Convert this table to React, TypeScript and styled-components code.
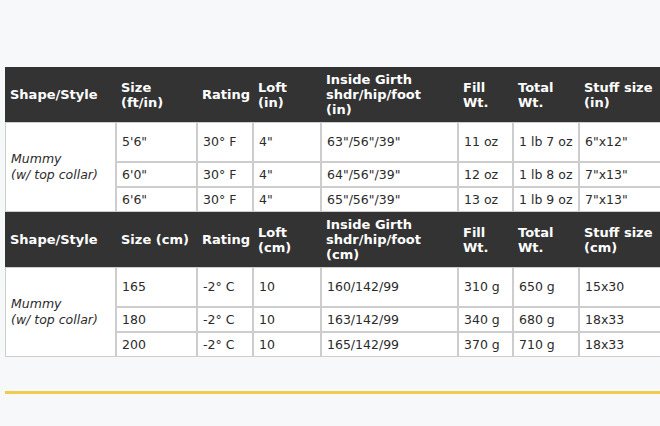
import styled, { createGlobalStyle } from 'styled-components';

interface SizeRow {
  size: string;
  rating: string;
  loft: string;
  girth: string;
  fill: string;
  total: string;
  stuff: string;
}

interface SpecSection {
  headers: string[][];
  style: string[];
  rows: SizeRow[];
}

const sections: SpecSection[] = [
  {
    headers: [
      ['Shape/Style'],
      ['Size', '(ft/in)'],
      ['Rating'],
      ['Loft', '(in)'],
      ['Inside Girth', 'shdr/hip/foot', '(in)'],
      ['Fill', 'Wt.'],
      ['Total', 'Wt.'],
      ['Stuff size', '(in)'],
    ],
    style: ['Mummy', '(w/ top collar)'],
    rows: [
      { size: '5\'6"', rating: '30° F', loft: '4"', girth: '63"/56"/39"', fill: '11 oz', total: '1 lb 7 oz', stuff: '6"x12"' },
      { size: '6\'0"', rating: '30° F', loft: '4"', girth: '64"/56"/39"', fill: '12 oz', total: '1 lb 8 oz', stuff: '7"x13"' },
      { size: '6\'6"', rating: '30° F', loft: '4"', girth: '65"/56"/39"', fill: '13 oz', total: '1 lb 9 oz', stuff: '7"x13"' },
    ],
  },
  {
    headers: [
      ['Shape/Style'],
      ['Size (cm)'],
      ['Rating'],
      ['Loft', '(cm)'],
      ['Inside Girth', 'shdr/hip/foot', '(cm)'],
      ['Fill', 'Wt.'],
      ['Total', 'Wt.'],
      ['Stuff size', '(cm)'],
    ],
    style: ['Mummy', '(w/ top collar)'],
    rows: [
      { size: '165', rating: '-2° C', loft: '10', girth: '160/142/99', fill: '310 g', total: '650 g', stuff: '15x30' },
      { size: '180', rating: '-2° C', loft: '10', girth: '163/142/99', fill: '340 g', total: '680 g', stuff: '18x33' },
      { size: '200', rating: '-2° C', loft: '10', girth: '165/142/99', fill: '370 g', total: '710 g', stuff: '18x33' },
    ],
  },
];

const columnWidths = [111, 81, 56, 68, 137, 55, 66, 100];

const GlobalStyle = createGlobalStyle`
  html, body {
    margin: 0;
    padding: 0;
    background: #f7f8f9;
    overflow: hidden;
  }
  body {
    font-family: "DejaVu Sans", Verdana, sans-serif;
  }
`;

const Page = styled.main`
  width: 660px;
  height: 426px;
  padding: 67px 0 0 5px;
  box-sizing: border-box;
  overflow: hidden;
`;

const SpecTable = styled.table`
  border-collapse: separate;
  border-spacing: 0;
  table-layout: fixed;
  width: ${columnWidths.reduce((a, b) => a + b, 0)}px;
  font-size: 12.5px;
  color: #2b2b2b;
`;

const HeadRow = styled.tr`
  height: 55px;
`;

const HeadCell = styled.th`
  background: #333;
  color: #fff;
  font-size: 13px;
  font-weight: bold;
  text-align: left;
  vertical-align: middle;
  padding: 0 5px;
  line-height: 15px;
  white-space: nowrap;
`;

const BodyRow = styled.tr<{ $tall?: boolean }>`
  height: ${(p) => (p.$tall ? 40 : 25)}px;
`;

const Cell = styled.td`
  background: #fff;
  border: 1px solid #cdcdcd;
  padding: 0 5px;
  vertical-align: middle;
  white-space: nowrap;
  line-height: 16px;
`;

const StyleCell = styled(Cell)`
  font-style: italic;
  white-space: normal;
`;

const Divider = styled.hr`
  margin: 34px 0 0;
  border: 0;
  height: 3px;
  width: 660px;
  background: #f1cb4b;
`;

function App() {
  return (
    <>
      <GlobalStyle />
      <Page>
        <SpecTable>
          <colgroup>
            {columnWidths.map((w, i) => (
              <col key={i} style={{ width: w }} />
            ))}
          </colgroup>
          <tbody>
            {sections.map((section, si) => [
              <HeadRow key={`h${si}`}>
                {section.headers.map((lines, i) => (
                  <HeadCell key={i}>
                    {lines.map((line, li) => (
                      <div key={li}>{line}</div>
                    ))}
                  </HeadCell>
                ))}
              </HeadRow>,
              ...section.rows.map((row, ri) => (
                <BodyRow key={`r${si}-${ri}`} $tall={ri === 0}>
                  {ri === 0 && (
                    <StyleCell rowSpan={section.rows.length}>
                      {section.style[0]}
                      <br />
                      {section.style[1]}
                    </StyleCell>
                  )}
                  <Cell>{row.size}</Cell>
                  <Cell>{row.rating}</Cell>
                  <Cell>{row.loft}</Cell>
                  <Cell>{row.girth}</Cell>
                  <Cell>{row.fill}</Cell>
                  <Cell>{row.total}</Cell>
                  <Cell>{row.stuff}</Cell>
                </BodyRow>
              )),
            ])}
          </tbody>
        </SpecTable>
        <Divider />
      </Page>
    </>
  );
}

export default App;
